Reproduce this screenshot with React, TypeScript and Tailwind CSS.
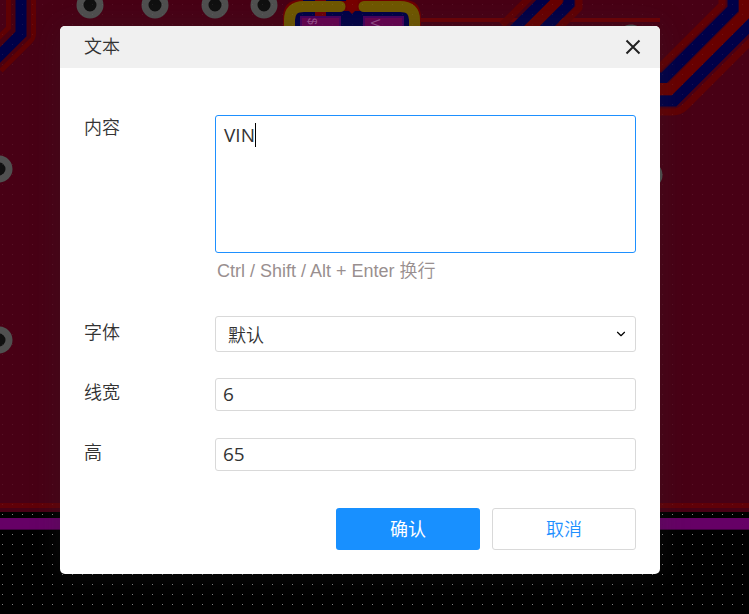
import { ChevronDown } from 'lucide-react';

const vias = [
  [90, 5],
  [155, 5],
  [215, 5],
  [264, 5],
  [-1, 169],
  [-1, 340],
  [631, 38],
  [649, 175],
];

function Board() {
  return (
    <svg
      aria-hidden="true"
      className="absolute inset-0 h-full w-full"
      viewBox="0 0 749 614"
      preserveAspectRatio="xMidYMid slice"
      fill="none"
    >
      <defs>
        <pattern id="grid" width="10" height="10" patternUnits="userSpaceOnUse">
          <rect x="2" y="4" width="1" height="1" fill="#fff" />
        </pattern>
      </defs>
      <rect width="749" height="614" fill="#000" />
      <rect width="749" height="512" fill="#480015" />
      <rect y="503" width="749" height="5" fill="#600008" />
      <rect y="518" width="749" height="12" fill="#660066" />
      <rect y="529" width="749" height="1" fill="#40003f" />

      {/* Left trace */}
      <path d="M21 -5V33L-8 62" stroke="#600003" strokeWidth="30" strokeLinejoin="round" />
      <path d="M21 -5V33L-8 62" stroke="#4a0010" strokeWidth="20" />
      <path d="M21 -5V34L-8 63" stroke="#000048" strokeWidth="11" />

      {/* Top middle footprint */}
      <path d="M283 30V18Q283 0 300 0H404Q421 0 421 18V30" fill="#700000" />
      <path d="M420 20H660" stroke="#6c0005" strokeWidth="4" />
      <path d="M295 30V18Q295 11 304 11H400Q409 11 409 18V30" fill="#000048" />
      <path d="M303 -2H350" stroke="#000048" strokeWidth="6" />
      <rect x="315" y="0" width="11" height="16" fill="#700008" />
      <path d="M289.500 30V20Q289.500 6.500 304 6.500H340" stroke="#705800" strokeWidth="11" strokeLinecap="round" />
      <path d="M414.500 30V20Q414.500 6.500 400 6.500H364" stroke="#705800" strokeWidth="11" strokeLinecap="round" />
      <path d="M346 0H358L357 9L352 14L347 9Z" fill="#780000" />
      <path d="M301 17H340V30H301Z M364 17H403V30H364Z" fill="#670052" stroke="#480060" strokeWidth="2" />
      <g fill="#9b5090" fontFamily="Liberation Sans" fontSize="12">
        <text transform="translate(308 18) rotate(90)">$</text>
        <text transform="translate(371 19) rotate(90)">V</text>
      </g>

      {/* Differential pair right of the footprint */}
      <path d="M502 25L532 -5M579 -5V8L554 33" stroke="#600004" strokeWidth="7" strokeLinejoin="round" />
      <path d="M514 30L549 -5" stroke="#000048" strokeWidth="11" />
      <path d="M569 -5V4L543 30" stroke="#000048" strokeWidth="11" />
      <path d="M528 30L557 1V-5" stroke="#680000" strokeWidth="11" />

      {/* Right edge traces */}
      <path d="M722 -5V5L655 72M655 112H673Q680 112 686 106L754 38" stroke="#600004" strokeWidth="7" strokeLinejoin="round" />
      <path d="M733 -5V9L664 78H650" stroke="#000048" strokeWidth="11" />
      <path d="M650 89H671L745 15V-5" stroke="#680000" strokeWidth="12" />
      <path d="M650 101H674L754 21" stroke="#000048" strokeWidth="11" />

      {vias.map(([cx, cy]) => (
        <circle key={`${cx}-${cy}`} cx={cx} cy={cy} r="10" fill="#101010" stroke="#505050" strokeWidth="7" />
      ))}

      <rect width="749" height="512" fill="url(#grid)" opacity="0.08" />
      <rect y="512" width="749" height="6" fill="url(#grid)" opacity="0.5" />
      <rect y="530" width="749" height="84" fill="url(#grid)" opacity="0.5" />
    </svg>
  );
}

const label = 'w-[131px] shrink-0 leading-[22px]';
const field = 'min-w-0 flex-1 rounded-[3px] border border-[#d9d9d9] bg-white text-[#333] outline-none';
const numberField = "h-[33px] px-[7px] pb-0.5 font-['Open_Sans'] text-[19px] font-normal";

export default function App() {
  return (
    <main
      className="relative min-h-screen overflow-hidden bg-black pt-[26px] pr-[89px] pb-10 pl-[60px] text-[18px] font-[350] text-[#333]"
      style={{ fontFamily: '"Noto Sans CJK SC", sans-serif' }}
    >
      <Board />

      <section
        role="dialog"
        aria-labelledby="dialog-title"
        className="relative w-full max-w-[600px] overflow-hidden rounded-[5px] bg-white shadow-[0_0_30px_rgba(50,50,50,0.25)]"
      >
        <header className="flex h-[42px] items-center justify-between bg-[#f0f0f0] pr-[18px] pl-6">
          <h1 id="dialog-title" className="pb-1 font-[350]">文本</h1>
          <button type="button" aria-label="关闭" className="flex size-[18px] items-center justify-center">
            <svg className="size-[18px]" viewBox="0 0 18 18" stroke="#222" strokeWidth="2">
              <path d="M2.500 2.500L15.500 15.500M15.500 2.500L2.500 15.500" />
            </svg>
          </button>
        </header>

        <form className="px-6 pt-[47px] pb-6" onSubmit={(e) => e.preventDefault()}>
          <div className="flex">
            <label htmlFor="content" className={label}>内容</label>
            <div className="min-w-0 flex-1">
              <div className="relative">
                <textarea
                  id="content"
                  defaultValue="VIN"
                  className="block h-[138px] w-full resize-none rounded-[3px] border border-[#1e90ff] px-2 py-[7px] font-['Open_Sans'] text-[19px] leading-6 font-normal text-[#333] outline-none"
                />
                {/* Text caret */}
                <span className="absolute top-2 left-10 h-6 w-px bg-black" />
              </div>
              <p className="mt-1 pl-0.5 font-['Liberation_Sans','Noto_Sans_CJK_SC'] leading-7 text-[#998f8f]">
                Ctrl / Shift / Alt + Enter 换行
              </p>
            </div>
          </div>

          <div className="mt-[31px] flex">
            <label htmlFor="font" className={`${label} pt-1`}>字体</label>
            <div className="relative flex min-w-0 flex-1">
              <select id="font" className={`${field} h-9 appearance-none px-3`}>
                <option>默认</option>
              </select>
              <ChevronDown className="pointer-events-none absolute top-[11px] right-2 size-[14px] text-black" />
            </div>
          </div>

          <div className="mt-[26px] flex">
            <label htmlFor="line-width" className={`${label} pt-0.5`}>线宽</label>
            <input id="line-width" type="text" defaultValue="6" className={`${field} ${numberField}`} />
          </div>

          <div className="mt-[27px] flex">
            <label htmlFor="height" className={`${label} pt-0.5`}>高</label>
            <input id="height" type="text" defaultValue="65" className={`${field} ${numberField}`} />
          </div>

          <div className="mt-[37px] flex justify-end gap-3">
            <button type="submit" className="h-[42px] w-36 rounded-[3px] bg-[#1890ff] pb-0.5 font-normal text-white">确认</button>
            <button type="button" className="h-[42px] w-36 rounded-[3px] border border-[#d9d9d9] bg-white pb-0.5 text-[#1e90ff]">取消</button>
          </div>
        </form>
      </section>
    </main>
  );
}
